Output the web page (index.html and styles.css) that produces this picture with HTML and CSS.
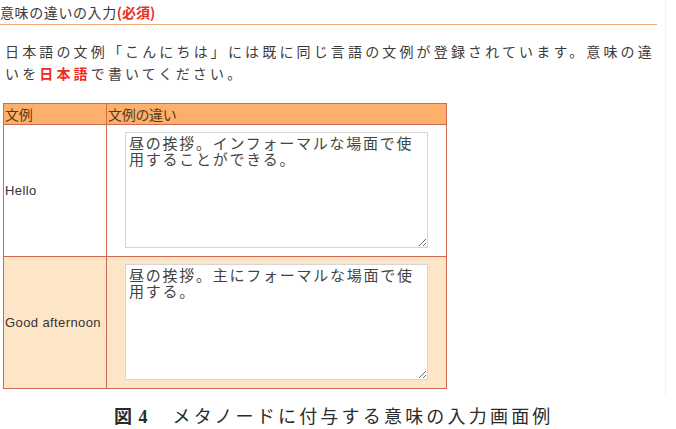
FILE: index.html
```html
<!DOCTYPE html>
<html lang="ja">
<head>
<meta charset="utf-8">
<title>意味の違いの入力</title>
<link rel="stylesheet" href="styles.css">
</head>
<body>
<div class="sheet">
  <h2 class="heading">意味の違いの入力<span class="req">(必須)</span></h2>
  <p class="notice">日本語の文例「こんにちは」には既に同じ言語の文例が登録されています。意味の違いを<strong class="hl">日本語</strong>で書いてください。</p>
  <table class="examples">
    <thead>
      <tr><th class="col-ex">文例</th><th>文例の違い</th></tr>
    </thead>
    <tbody>
      <tr>
        <td class="col-ex">Hello</td>
        <td class="cell-input"><textarea class="meaning">昼の挨拶。インフォーマルな場面で使用することができる。</textarea></td>
      </tr>
      <tr class="alt">
        <td class="col-ex">Good afternoon</td>
        <td class="cell-input"><textarea class="meaning">昼の挨拶。主にフォーマルな場面で使用する。</textarea></td>
      </tr>
    </tbody>
  </table>
</div>
<p class="caption"><b>図 4</b><span class="cap-text">メタノードに付与する意味の入力画面例</span></p>
</body>
</html>
```
FILE: styles.css
```css
html, body {
  margin: 0;
  padding: 0;
  background: #fff;
}

body {
  font-family: "Noto Sans CJK JP", "DejaVu Sans", sans-serif;
  color: #333;
  width: 676px;
  height: 429px;
  overflow: hidden;
}

.sheet {
  width: 666px;
  height: 397px;
  border-right: 1px solid #fbf0df;
  box-sizing: border-box;
}

.heading {
  margin: 0;
  width: 657px;
  height: 25px;
  padding: 3px 0 0 0;
  box-sizing: border-box;
  border-bottom: 1px solid #f6ad78;
  font-size: 14px;
  font-weight: normal;
  line-height: 18px;
  color: #3a3a3a;
  letter-spacing: 0.6px;
}

.req {
  color: #e8301c;
  font-weight: bold;
  letter-spacing: 0;
}

.notice {
  margin: 15px 0 0 5px;
  width: 656px;
  font-size: 14px;
  line-height: 22px;
  letter-spacing: 3.15px;
  color: #3c3c3c;
}

.hl {
  color: #ef2a1a;
  font-weight: bold;
}

.examples {
  margin: 19px 0 0 3px;
  border-collapse: collapse;
  width: 444px;
}

.examples th,
.examples td {
  border: 1px solid #cf6a52;
  padding: 0;
}

.examples th {
  background: #fcb06c;
  height: 20px;
  font-size: 14px;
  font-weight: normal;
  text-align: left;
  color: #5a3a14;
  line-height: 20px;
  padding-left: 1px;
  letter-spacing: -0.3px;
}

.col-ex {
  width: 101px;
}

.examples td.col-ex {
  font-family: "Liberation Sans", Arial, sans-serif;
  font-size: 13px;
  color: #333;
  letter-spacing: 0.4px;
  vertical-align: middle;
  padding-left: 1px;
}

.alt td {
  background: #fde5c8;
}

.cell-input {
  height: 124px;
  padding: 7px 0 0 18px !important;
  vertical-align: top;
}

.meaning {
  display: block;
  width: 303px;
  height: 116px;
  margin: 0;
  padding: 2px 3px;
  box-sizing: border-box;
  border: 1px solid #d6d6d6;
  background: #fff;
  font-family: "Noto Sans CJK JP", sans-serif;
  font-size: 15px;
  line-height: 16px;
  letter-spacing: 1.75px;
  color: #444;
  resize: vertical;
  overflow: hidden;
}

.caption {
  margin: 8px 0 0 114px;
  font-family: "Liberation Serif", "Noto Sans CJK JP", serif;
  font-size: 18px;
  line-height: 24px;
  color: #2a2a2a;
}

.caption b {
  letter-spacing: 1px;
}

.cap-text {
  margin-left: 24px;
  letter-spacing: 3.2px;
}
```
